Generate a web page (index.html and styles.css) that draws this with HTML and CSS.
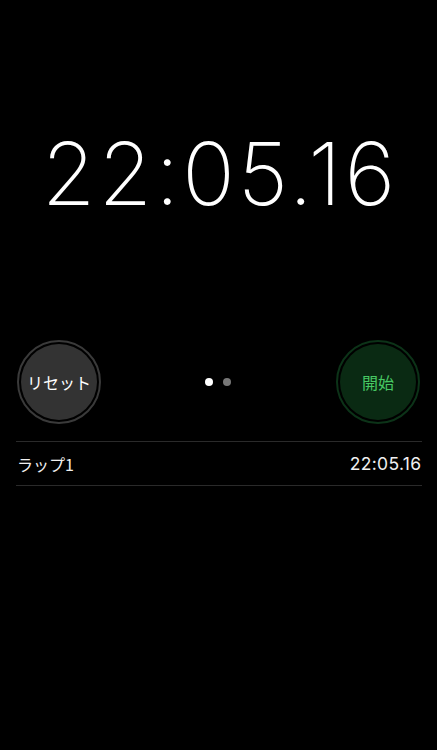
FILE: index.html
```html
<!DOCTYPE html>
<html lang="ja">
<head>
<meta charset="utf-8">
<link rel="stylesheet" href="styles.css">
</head>
<body>
<div class="screen">
  <div class="timer"><span class="timer-text">22:05.16</span></div>
  <div class="controls">
    <button class="btn btn-reset"><span class="btn-inner">リセット</span></button>
    <div class="dots"><span class="dot dot-on"></span><span class="dot"></span></div>
    <button class="btn btn-start"><span class="btn-inner">開始</span></button>
  </div>
  <ul class="laps">
    <li class="lap"><span class="lap-name">ラップ1</span><span class="lap-time">22:05.16</span></li>
  </ul>
</div>
</body>
</html>
```
FILE: styles.css
```css
html, body {
  margin: 0;
  padding: 0;
  background: #000;
}
.screen {
  width: 437px;
  height: 750px;
  background: #000;
  font-family: "Inter", "Noto Sans CJK JP", sans-serif;
  color: #fff;
}
.timer {
  padding-top: 129px;
  height: 89px;
  line-height: 89px;
  font-size: 87px;
  font-weight: 150;
  text-align: center;
}
.timer-text {
  letter-spacing: 3px;
  margin-right: -3px;
}
.controls {
  margin-top: 122px;
  padding: 0 17px 0 17px;
  display: flex;
  align-items: center;
  justify-content: space-between;
}
.btn {
  width: 84px;
  height: 84px;
  border-radius: 50%;
  padding: 2px;
  margin: 0;
  background: #000;
  display: flex;
  box-sizing: border-box;
  cursor: pointer;
  font-family: "Noto Sans CJK JP", sans-serif;
  font-size: 16px;
}
.btn-inner {
  flex: 1;
  border-radius: 50%;
  display: flex;
  align-items: center;
  justify-content: center;
}
.btn-reset {
  border: 2px solid #3a3a3a;
}
.btn-reset .btn-inner {
  background: #333;
  color: #fff;
}
.btn-start {
  border: 2px solid #0c3318;
}
.btn-start .btn-inner {
  background: #0a2a13;
  color: #47c863;
}
.dots {
  display: flex;
  gap: 10px;
  margin-left: -1px;
}
.dot {
  width: 8px;
  height: 8px;
  border-radius: 50%;
  background: #777;
}
.dot-on {
  background: #fff;
}
.laps {
  list-style: none;
  margin: 17px 15px 0 16px;
  padding: 0;
  border-top: 1px solid #2a2a2a;
}
.lap {
  display: flex;
  justify-content: space-between;
  align-items: center;
  height: 43px;
  border-bottom: 1px solid #2a2a2a;
  font-size: 17.5px;
  color: #f0f0f0;
  padding: 0 1px;
}
.lap-name {
  font-family: "Noto Sans CJK JP", sans-serif;
  font-size: 16px;
}
.lap-time {
  font-family: "Inter", sans-serif;
  letter-spacing: 0.3px;
  margin-right: -0.3px;
}
```
